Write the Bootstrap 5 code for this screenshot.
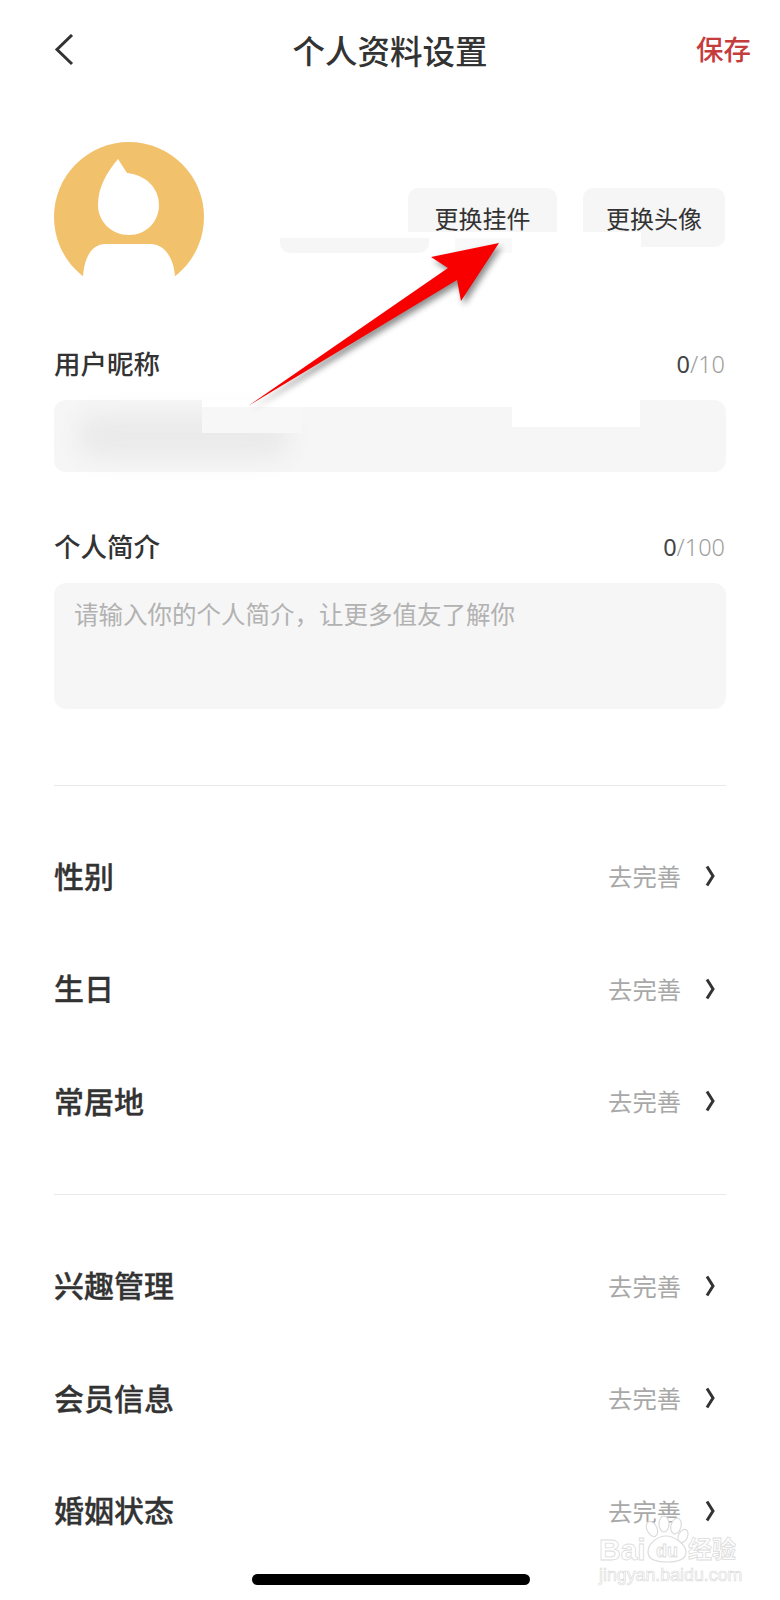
<!DOCTYPE html>
<html lang="zh-CN">
<head>
    <meta charset="UTF-8">
    <meta name="viewport" content="width=device-width, initial-scale=1.0">
    <title>个人资料设置</title>
    <link href="https://cdn.jsdelivr.net/npm/bootstrap@5.3.0/dist/css/bootstrap.min.css" rel="stylesheet">
    <style>
        body {
            background: #fff;
            color: #333;
            font-family: "Noto Sans CJK SC", "Liberation Sans", sans-serif;
        }
        .page-wrap { width: 780px; height: 1600px; overflow: hidden; padding: 0 54px; }

        /* 顶部 */
        .top-bar { height: 100px; }
        .top-title { font-size: 32.5px; font-weight: 500; line-height: 1; color: #333; }
        .top-save { font-size: 27.5px; font-weight: 500; line-height: 1; color: #c43c3c; margin: -2px -25px 0 0; }
        .top-back { width: 54px; }
        .top-right { width: 54px; }

        /* 头像 */
        .avatar-row { margin-top: 42px; height: 135px; }
        .avatar-btns { margin-top: 46px; margin-right: 1px; gap: 26px; }
        .avatar-btn {
            height: 59px;
            padding: 0;
            background: #f6f6f6;
            border: 0;
            border-radius: 10px;
            font-size: 24px;
            line-height: 59px;
            color: #333;
        }
        .btn-pendant { width: 149px; }
        .btn-head { width: 142px; }

        /* 表单 */
        .field-head { height: 40px; }
        .field-name { margin-top: 66px; }
        .field-bio { margin-top: 54px; }
        .field-label { font-size: 26.5px; font-weight: 500; line-height: 40px; color: #333; }
        .field-count { font-size: 23.5px; font-weight: 300; line-height: 42px; margin-right: 1px; color: #a0a0a0; font-family: "Noto Sans", sans-serif; }
        .field-count b { font-weight: 400; color: #444; }
        .form-control.field-box {
            margin-top: 17px;
            background: #f6f6f6;
            border: 0;
            border-radius: 12px;
            box-shadow: none;
            resize: none;
        }
        .box-input { height: 72px; }
        .box-text {
            height: 126px;
            padding: 14px 20px;
            font-size: 24.5px;
            line-height: 34px;
        }
        .box-text::placeholder { color: #b2b2b2; opacity: 1; }

        /* 列表 */
        .split-line { margin: 0; border: 0; border-top: 1px solid #e9e9e9; opacity: 1; width: 672px; }
        .line-one { margin-top: 76px; }
        .info-list { margin: 34px 0 36px 0; background: transparent; }
        .info-list-two { margin: 35px 0 0 0; }
        .info-row {
            height: 112.5px;
            padding: 0;
            background: transparent;
            border: 0;
        }
        .info-name { font-size: 30px; font-weight: 500; -webkit-text-stroke: .3px #333; color: #333; line-height: 1; margin-top: -3px; }
        .info-todo { font-size: 24.3px; color: #a8a8a8; line-height: 1; }
        .info-arrow { margin: 0 11px 0 24px; display: block; }

        .home-bar { width: 278px; height: 11px; margin: 7px 0 0 198px; background: #000; border-radius: 6px; }

        /* 截图上的涂抹和标注 */
        .mask-layer { position: absolute; pointer-events: none; }
        .mask-white { background: #fff; }
        .mask-a { left: 408px; top: 232px; width: 233px; height: 20px; }
        .mask-b { left: 280px; top: 238px; width: 149px; height: 15px; border-radius: 0 0 10px 10px; background: #f6f6f6; }
        .mask-c { left: 455px; top: 238px; width: 57px; height: 15px; background: #f9f9f9; }
        .mask-d { left: 202px; top: 400px; width: 310px; height: 7px; }
        .mask-e { left: 512px; top: 400px; width: 128px; height: 27px; }
        .mask-f { left: 78px; top: 414px; width: 212px; height: 44px; background: #eaeaea; filter: blur(11px); border-radius: 20px; }
        .mask-g { left: 202px; top: 407px; width: 100px; height: 26px; background: #f7f7f7; }
        .mark-arrow { position: absolute; left: 0; top: 0; pointer-events: none; filter: drop-shadow(3px 4px 3px rgba(0,0,0,.45)); }

        .wm-box { position: absolute; left: 598px; top: 1514px; width: 145px; height: 74px; pointer-events: none; }
        .wm-text {
            position: absolute;
            line-height: 1;
            color: #fff;
            font-family: "Liberation Sans", sans-serif;
            font-weight: 700;
            -webkit-text-stroke: .8px #dcdcdc;
        }
        .wm-bai { left: 1px; top: 21px; font-size: 30px; }
        .wm-du { left: 58px; top: 28px; font-size: 18px; }
        .wm-cn { left: 90px; top: 22px; font-size: 24px; font-family: "Noto Sans CJK SC", sans-serif; }
        .wm-url { left: 1px; top: 53px; font-size: 17.8px; font-weight: 400; -webkit-text-stroke: .6px #d8d8d8; }
    </style>
</head>
<body>

<div class="page-wrap position-relative">

    <!-- 顶部导航 -->
    <div class="top-bar d-flex align-items-center justify-content-between">
        <div class="top-back">
            <svg width="20" height="32" viewBox="0 0 20 32" class="d-block"><path d="M18 1 L3 15.5 L18 30" fill="none" stroke="#333" stroke-width="3"/></svg>
        </div>
        <div class="top-title">个人资料设置</div>
        <div class="top-right text-end"><div class="top-save text-nowrap">保存</div></div>
    </div>

    <!-- 头像 -->
    <div class="avatar-row d-flex justify-content-between">
        <svg width="150" height="135" viewBox="0 0 150 135" class="d-block">
            <circle cx="75" cy="75" r="75" fill="#f2c16b"/>
            <path d="M29 135 C30 118 36 102 52 102 H96 C112 102 120 118 121 135 V150 H29 Z" fill="#fff"/>
            <path d="M64 17 L73 31 C92 33 105 46 105 63 C105 80 92 93 75 93 C58 93 44 80 44 63 C44 45 53 30 64 17 Z" fill="#fff"/>
        </svg>
        <div class="avatar-btns d-flex align-items-start">
            <button type="button" class="btn avatar-btn btn-pendant">更换挂件</button>
            <button type="button" class="btn avatar-btn btn-head">更换头像</button>
        </div>
    </div>

    <!-- 用户昵称 -->
    <div class="field-head field-name d-flex justify-content-between">
        <div class="field-label">用户昵称</div>
        <div class="field-count"><b>0</b>/10</div>
    </div>
    <input type="text" class="form-control field-box box-input">

    <!-- 个人简介 -->
    <div class="field-head field-bio d-flex justify-content-between">
        <div class="field-label">个人简介</div>
        <div class="field-count"><b>0</b>/100</div>
    </div>
    <textarea class="form-control field-box box-text" placeholder="请输入你的个人简介，让更多值友了解你"></textarea>

    <hr class="split-line line-one">

    <div class="list-group list-group-flush info-list">
        <div class="list-group-item info-row d-flex align-items-center justify-content-between">
            <span class="info-name">性别</span>
            <span class="d-flex align-items-center"><span class="info-todo">去完善</span><svg class="info-arrow" width="10" height="22" viewBox="0 0 10 22"><path d="M2 1.5 L8 11 L2 20.5" fill="none" stroke="#333" stroke-width="3"/></svg></span>
        </div>
        <div class="list-group-item info-row d-flex align-items-center justify-content-between">
            <span class="info-name">生日</span>
            <span class="d-flex align-items-center"><span class="info-todo">去完善</span><svg class="info-arrow" width="10" height="22" viewBox="0 0 10 22"><path d="M2 1.5 L8 11 L2 20.5" fill="none" stroke="#333" stroke-width="3"/></svg></span>
        </div>
        <div class="list-group-item info-row d-flex align-items-center justify-content-between">
            <span class="info-name">常居地</span>
            <span class="d-flex align-items-center"><span class="info-todo">去完善</span><svg class="info-arrow" width="10" height="22" viewBox="0 0 10 22"><path d="M2 1.5 L8 11 L2 20.5" fill="none" stroke="#333" stroke-width="3"/></svg></span>
        </div>
    </div>

    <hr class="split-line">

    <div class="list-group list-group-flush info-list-two">
        <div class="list-group-item info-row d-flex align-items-center justify-content-between">
            <span class="info-name">兴趣管理</span>
            <span class="d-flex align-items-center"><span class="info-todo">去完善</span><svg class="info-arrow" width="10" height="22" viewBox="0 0 10 22"><path d="M2 1.5 L8 11 L2 20.5" fill="none" stroke="#333" stroke-width="3"/></svg></span>
        </div>
        <div class="list-group-item info-row d-flex align-items-center justify-content-between">
            <span class="info-name">会员信息</span>
            <span class="d-flex align-items-center"><span class="info-todo">去完善</span><svg class="info-arrow" width="10" height="22" viewBox="0 0 10 22"><path d="M2 1.5 L8 11 L2 20.5" fill="none" stroke="#333" stroke-width="3"/></svg></span>
        </div>
        <div class="list-group-item info-row d-flex align-items-center justify-content-between">
            <span class="info-name">婚姻状态</span>
            <span class="d-flex align-items-center"><span class="info-todo">去完善</span><svg class="info-arrow" width="10" height="22" viewBox="0 0 10 22"><path d="M2 1.5 L8 11 L2 20.5" fill="none" stroke="#333" stroke-width="3"/></svg></span>
        </div>
    </div>

    <div class="home-bar"></div>

    <!-- 截图上的涂抹 -->
    <div class="mask-layer mask-white mask-a"></div>
    <div class="mask-layer mask-b"></div>
    <div class="mask-layer mask-c"></div>
    <div class="mask-layer mask-f"></div>
    <div class="mask-layer mask-white mask-d"></div>
    <div class="mask-layer mask-white mask-e"></div>
    <div class="mask-layer mask-g"></div>

    <!-- 红色箭头 -->
    <svg class="mark-arrow" width="780" height="500" viewBox="0 0 780 500">
        <path d="M499 243 L431 257 L448 268 L248 406 L457 280 L461 301 Z" fill="#f80000"/>
    </svg>

    <!-- 水印 -->
    <div class="wm-box">
        <svg width="145" height="60" viewBox="0 0 145 60" class="position-absolute top-0 start-0">
            <g fill="#fff" stroke="#dcdcdc" stroke-width="1.2">
                <ellipse cx="54" cy="15" rx="5" ry="8" transform="rotate(-25 54 15)"/>
                <ellipse cx="66" cy="10" rx="5" ry="8"/>
                <ellipse cx="78" cy="12" rx="5" ry="8" transform="rotate(15 78 12)"/>
                <ellipse cx="85" cy="22" rx="4.5" ry="7" transform="rotate(25 85 22)"/>
                <path d="M50 38 C50 29 60 22 68 22 C76 22 88 30 88 38 C88 46 78 48 69 48 C60 48 50 46 50 38 Z"/>
            </g>
        </svg>
        <span class="wm-text wm-bai">Bai</span>
        <span class="wm-text wm-du">du</span>
        <span class="wm-text wm-cn">经验</span>
        <span class="wm-text wm-url">jingyan.baidu.com</span>
    </div>

</div>

<script src="https://cdn.jsdelivr.net/npm/bootstrap@5.3.0/dist/js/bootstrap.bundle.min.js"></script>
</body>
</html>
